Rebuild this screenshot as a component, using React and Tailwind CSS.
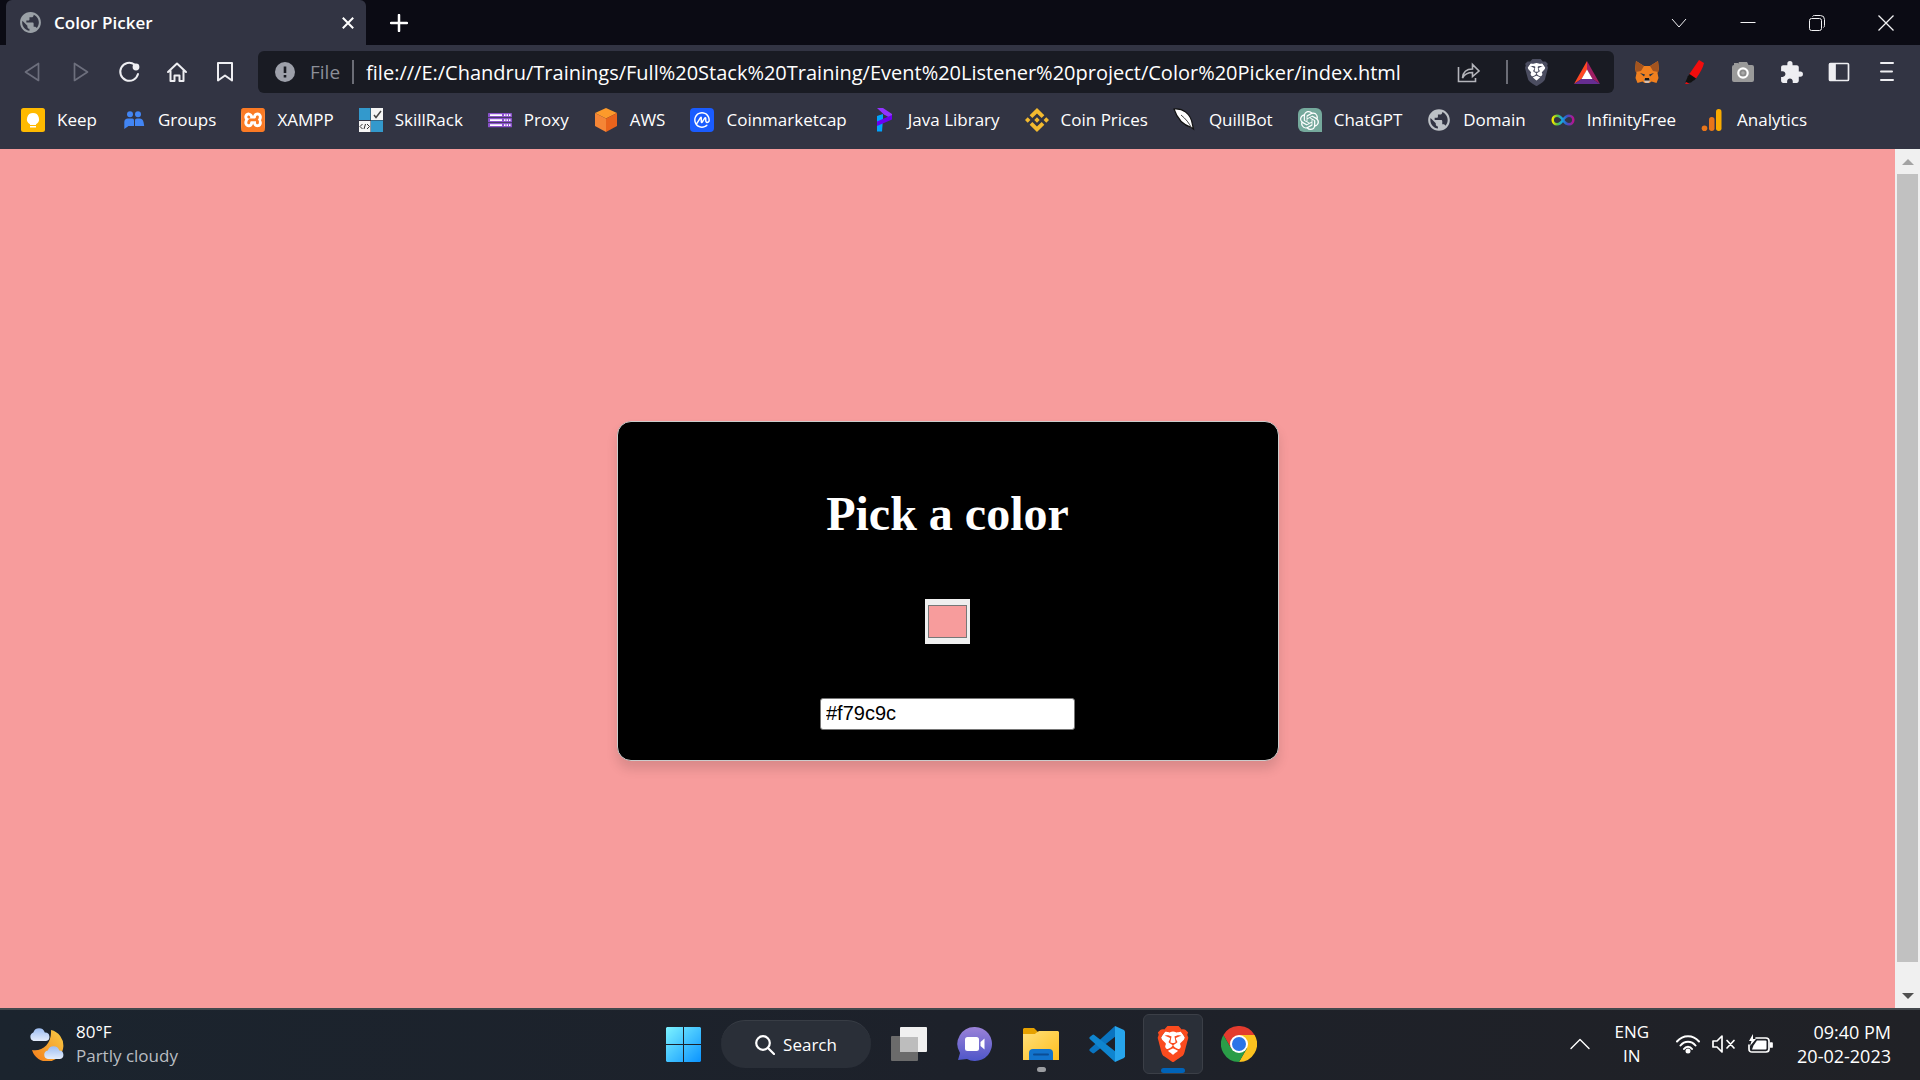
import React, { useState } from "react";
import { MdPublic, MdExtension } from "react-icons/md";
import { SiBrave, SiBinance, SiXampp, SiCoinmarketcap, SiOpenai } from "react-icons/si";

const Keep = () => (
  <svg viewBox="0 0 24 24" className="size-6">
    <rect width="24" height="24" rx="2.500" fill="#ffba00" />
    <path d="M12 5a6 6 0 0 0-3 11.200V17h6v-.8A6 6 0 0 0 12 5zM9 18h6v1.500H9z" fill="#fff" />
  </svg>
);

const Groups = () => (
  <svg viewBox="0 0 24 24" className="size-6" fill="#4285f4">
    <circle cx="8" cy="6.300" r="3" />
    <circle cx="16" cy="6.300" r="3" />
    <path d="M2.300 21v-7c0-2 1.500-3.400 3.500-3.400h4.400c1.500 0 1.800 1 1.800 2.400V18H6.500z" />
    <path d="M13 18v-5c0-1.600.6-2.400 2-2.400h2.700c2 0 3.300 1.500 3.800 3.400l.7 4z" />
  </svg>
);

const Xampp = () => (
  <span className="flex size-6 items-center justify-center rounded-md bg-white">
    <SiXampp size={24} color="#fb7a24" />
  </span>
);

const SkillRack = () => (
  <svg viewBox="0 0 24 24" className="size-6">
    <path d="M0 0h11.500v12H0zM12 12.500h12V24H12z" fill="#3399cc" />
    <path d="M12 0h12v12H12zM0 13h11.500v11H0z" fill="#f5f5f5" />
    <path d="m15 7 2 2.500L22 3" stroke="#444" strokeWidth="1.500" fill="none" />
    <path d="m3.500 16-2.500 2.500L3.500 21M8 16l2.500 2.500L8 21M6.500 16 5 21" stroke="#333" fill="none" />
  </svg>
);

const Proxy = () => (
  <svg viewBox="0 0 24 24" className="size-6">
    {[5, 10, 15].map((y) => (
      <g key={y}>
        <rect y={y} width="24" height="4.300" rx=".6" fill="#8b52cc" />
        <path d={`M2 ${y + 2.1}h12M16 ${y + 2.1}h1.500M18.500 ${y + 2.1}h1.500M21 ${y + 2.1}h1.500`} stroke="#fff" strokeWidth="1.600" />
      </g>
    ))}
  </svg>
);

const Aws = () => (
  <svg viewBox="0 0 24 24" className="size-6">
    <path d="M12 0 23 5 12 10.500 1 5z" fill="#fd9a2b" />
    <path d="M1 5l11 5.500V24L1 18z" fill="#f58536" />
    <path d="M23 5l-11 5.500V24l11-6z" fill="#e9631c" />
  </svg>
);

const Cmc = () => (
  <span className="flex size-6 items-center justify-center rounded-sm bg-[#1a5cff]">
    <SiCoinmarketcap size={16} color="#fff" />
  </span>
);

const Java = () => (
  <svg viewBox="0 0 24 24" className="size-6">
    <path d="M5 8l6-2v4.500l-1 13H5z" fill="#00a3ff" />
    <path d="M5 0h6l9 6v5L12 6.500z" fill="#9333ff" />
    <path d="M20 7v4.500L5 18v-4.500z" fill="#6b00f0" />
  </svg>
);

const Quill = () => (
  <svg viewBox="0 0 24 24" className="size-6">
    <path d="M1 1c8-1 17 4 18.500 16l1 4-2-1.500C10 17 4 10 1 1z" fill="#fff" stroke="#111" strokeWidth="1.200" />
    <path d="M8 7c5 4 8 8 10.500 13" stroke="#444" fill="none" />
  </svg>
);

const Gpt = () => (
  <span className="flex size-6 items-center justify-center rounded-l-md rounded-tr-md bg-[#75a99c]">
    <SiOpenai size={19} color="#fff" />
  </span>
);

const Infinity = () => (
  <svg viewBox="0 0 24 24" className="size-6">
    <defs>
      <linearGradient id="inf">
        <stop offset="0" stopColor="#f5e600" />
        <stop offset=".22" stopColor="#5fc43a" />
        <stop offset=".45" stopColor="#16a6e8" />
        <stop offset=".68" stopColor="#3558c8" />
        <stop offset="1" stopColor="#b8128f" />
      </linearGradient>
    </defs>
    <path d="M12 12c-2-3-3.500-4.300-6-4.300a4.300 4.300 0 0 0 0 8.600c2.500 0 4-1.300 6-4.300s3.500-4.300 6-4.300a4.300 4.300 0 0 1 0 8.600c-2.500 0-4-1.300-6-4.300z" fill="none" stroke="url(#inf)" strokeWidth="2.500" />
  </svg>
);

const Analytics = () => (
  <svg viewBox="0 0 24 24" className="size-6">
    <rect x="15" y="1" width="5.500" height="22" rx="2.700" fill="#f9ab00" />
    <rect x="8" y="9" width="5.500" height="14" rx="2.700" fill="#e8751a" />
    <circle cx="3.500" cy="20.200" r="2.800" fill="#e8751a" />
  </svg>
);

const bookmarks = [
  ["Keep", <Keep />],
  ["Groups", <Groups />],
  ["XAMPP", <Xampp />],
  ["SkillRack", <SkillRack />],
  ["Proxy", <Proxy />],
  ["AWS", <Aws />],
  ["Coinmarketcap", <Cmc />],
  ["Java Library", <Java />],
  ["Coin Prices", <SiBinance size={24} color="#f3ba2f" />],
  ["QuillBot", <Quill />],
  ["ChatGPT", <Gpt />],
  ["Domain", <MdPublic size={26} color="#bdc1c6" className="-mx-px" />],
  ["InfinityFree", <Infinity />],
  ["Analytics", <Analytics />],
];

function Lion({ className, shield }) {
  return (
    <svg viewBox="0 0 24 24" className={className}>
      <path d="M7 3h10l3 4.500-1.800 8.500L12 21l-6.200-5L4 7.500z" fill="#fff" />
      <SiBrave size={24} color={shield} />
    </svg>
  );
}

const Fox = () => (
  <svg viewBox="0 0 24 24" className="size-6">
    <path d="M1 1l8 5h6l8-5 .8 8-1.300 4 1 5-2 5-5-1.500-2 1.500h-5l-2-1.500-5 1.500-2-5 1-5L.2 9z" fill="#f0801f" />
    <path d="M1 1l8 5-3 5-5.500 1L.2 8zM23 1l-8 5 3 5 5.500 1 .3-4z" fill="#a3541f" />
    <path d="M5 13l5 1.500-1 2zM19 13l-5 1.500 1 2z" fill="#233447" />
    <path d="M9 19l1.500-1h3l1.500 1v2l-1.500 2h-3L9 21z" fill="#d5bfb2" />
    <path d="M10 18h4l.8 2.500H9.200z" fill="#161616" />
  </svg>
);

const Marker = () => (
  <svg viewBox="0 0 24 24" className="size-6">
    <path d="M16 0l5 3c-1 5-4 10-8 15.500L6 14.500z" fill="#f20d0d" />
    <path d="M5 16l6 4-3 2.500-4 .5-1.500-1z" fill="#111" />
    <path d="M6.500 14l6.500 4.500-2 2L4.500 17z" fill="#111" />
    <path d="M2 24l1.500-2 3 2z" fill="#f20d0d" />
  </svg>
);

const Camera = () => (
  <svg viewBox="0 0 24 24" className="size-6">
    <path d="M8 2h8l1.500 3H21a2 2 0 0 1 2 2v13a2 2 0 0 1-2 2H3a2 2 0 0 1-2-2V7a2 2 0 0 1 2-2h3.500z" fill="#9a9a9a" />
    <rect x="3" y="3" width="4" height="2" fill="#9a9a9a" />
    <circle cx="12" cy="13" r="4.700" fill="#8a8a8a" stroke="#fff" strokeWidth="2.200" />
    <circle cx="12" cy="13" r="1.800" fill="#aaa" />
  </svg>
);

const line = { fill: "none", stroke: "#eeeef2", strokeWidth: 1.7, strokeLinejoin: "round", strokeLinecap: "round" };

const Sidebar = () => (
  <svg viewBox="0 0 24 24" className="size-6" {...line}>
    <rect x="2.500" y="3.500" width="19" height="17" rx="1" />
    <path d="M3 4h5v16H3z" fill="#eeeef2" />
  </svg>
);

const Menu = () => (
  <svg viewBox="0 0 24 24" className="size-6" {...line} strokeWidth="2">
    <path d="M6 3h12M6 11.500h11M6 20h12" />
  </svg>
);

const navButtons = [
  ["Back", <svg viewBox="0 0 24 24" className="size-6" {...line} stroke="#6d6f7d"><path d="M17.500 3.500v17L4.500 12z" /></svg>],
  ["Forward", <svg viewBox="0 0 24 24" className="size-6" {...line} stroke="#6d6f7d"><path d="M5.500 3.500v17l13-8.500z" /></svg>],
  ["Reload", <svg viewBox="0 0 24 24" className="size-6" {...line} strokeWidth="2"><path d="M17.500 4.500A9 9 0 1 0 21 14" /><circle cx="19" cy="7" r="2.400" fill="#eeeef2" /></svg>],
  ["Home", <svg viewBox="0 0 24 24" className="size-6" {...line} strokeWidth="2"><path d="M3 12l9-8.500 9 8.500M5.500 10.500V21h4v-5.500h5V21h4V10.500" /></svg>],
  ["Bookmark", <svg viewBox="0 0 24 24" className="size-6" {...line} strokeWidth="2"><path d="M5 3h14v17.500l-7-5-7 5z" /></svg>],
];

const extensions = [
  ["MetaMask", <Fox />],
  ["Marker", <Marker />],
  ["Screenshot", <Camera />],
  ["Extensions", <MdExtension size={25} color="#eeeef2" />],
  ["Sidebar", <Sidebar />],
  ["Menu", <Menu />],
];

const thin = { fill: "none", stroke: "#f2f2f4", strokeWidth: 1 };
const windowButtons = [
  ["Search tabs", <svg viewBox="0 0 16 16" className="size-4" {...thin}><path d="M1 4l7 8 7-8" /></svg>],
  ["Minimize", <svg viewBox="0 0 16 16" className="size-4" {...thin}><path d="M.5 7.500h15" /></svg>],
  ["Restore", <svg viewBox="0 0 16 16" className="size-4" {...thin}><rect x=".5" y="3.500" width="12" height="12" rx="2" /><path d="M3.500 1.500q.5-1 2-1h6q4 0 4 4v6q0 1.500-1 2" /></svg>],
  ["Close", <svg viewBox="0 0 16 16" className="size-4" {...thin} strokeWidth="1.300"><path d="M.5.5l15 15M15.500.5l-15 15" /></svg>],
];

function TabStrip() {
  return (
    <div className="flex h-[45px] bg-[#0b0b14] pl-1.5">
      <div className="flex w-[360px] items-center rounded-t-md bg-[#323443] pr-2.5 pl-3">
        <MdPublic size={25} color="#9aa0a6" />
        <span className="ml-[11px] flex-1 text-[17px] font-semibold">Color Picker</span>
        <button aria-label="Close tab" className="flex size-4 items-center justify-center">
          <svg viewBox="0 0 12 12" className="size-3" stroke="#fff" strokeWidth="2"><path d="M.8.8l10.400 10.400M11.200.8.8 11.200" /></svg>
        </button>
      </div>
      <button aria-label="New tab" className="ml-6 self-center">
        <svg viewBox="0 0 18 18" className="size-[18px]" stroke="#fff" strokeWidth="2.500" strokeLinecap="round"><path d="M9 1v16M1 9h16" /></svg>
      </button>
      <div className="ml-auto flex">
        {windowButtons.map(([name, icon]) => (
          <button key={name} aria-label={name} className="flex w-[69px] items-center justify-center">{icon}</button>
        ))}
      </div>
    </div>
  );
}

function Toolbar() {
  return (
    <div className="flex items-center px-[9px] pt-1.5">
      {navButtons.map(([name, icon]) => (
        <button key={name} aria-label={name} className="flex h-[42px] w-12 items-center justify-center">{icon}</button>
      ))}
      <div className="ml-[9px] flex h-[42px] min-w-0 flex-1 items-center rounded-md bg-[#191b23] pr-3.5 pl-[17px]">
        <svg viewBox="0 0 20 20" className="size-5"><circle cx="10" cy="10" r="10" fill="#9da0aa" /><path d="M10 4.500v6.500M10 13v2.500" stroke="#191b23" strokeWidth="2.600" /></svg>
        <span className="ml-[15px] text-[19px] text-[#8b8e98]">File</span>
        <span className="mx-3 h-6 w-0.5 bg-[#6b6d76]" />
        <input aria-label="Address" defaultValue="file:///E:/Chandru/Trainings/Full%20Stack%20Training/Event%20Listener%20project/Color%20Picker/index.html" className="h-full min-w-0 flex-1 bg-transparent text-[20px] text-white outline-none" />
        <button aria-label="Share">
          <svg viewBox="0 0 24 24" className="size-6" fill="none" stroke="#b4b5bb" strokeWidth="1.600">
            <path d="M1.500 7v14.500h17V18M5.500 18c.5-6.500 4-9 10-9V4.500L22 11l-6.500 5.500v-4c-4.500 0-7.500 1-10 5.500z" />
          </svg>
        </button>
        <span className="mr-[15px] ml-[25px] h-6 w-0.5 bg-[#6b6d76]" />
        <button aria-label="Shields"><Lion className="size-[27px]" shield="#4b4d60" /></button>
        <button aria-label="Rewards" className="ml-6">
          <svg viewBox="0 0 26 23" className="h-[23px] w-[26px]">
            <path d="M13 0v9L7.500 18 0 23z" fill="#ff4724" />
            <path d="M13 0v9l5.500 9L26 23z" fill="#9e1f63" />
            <path d="M0 23l7.500-5h11l7.500 5z" fill="#662d91" />
            <path d="M13 8.500l5.500 9.500h-11z" fill="#fff" />
          </svg>
        </button>
      </div>
      <div className="ml-[9px] flex">
        {extensions.map(([name, icon]) => (
          <button key={name} aria-label={name} className="flex w-12 items-center justify-center">{icon}</button>
        ))}
      </div>
    </div>
  );
}

function Bookmarks() {
  return (
    <nav className="flex h-14 items-center gap-[25px] px-[21px] pb-0.5">
      {bookmarks.map(([name, icon]) => (
        <a key={name} href="#" className="flex shrink-0 items-center gap-3 text-[17px] whitespace-nowrap">
          {icon}
          {name}
        </a>
      ))}
    </nav>
  );
}

function Picker({ color, setColor }) {
  return (
    <form className="flex w-full max-w-[662px] flex-col items-center rounded-[14px] border border-[#ccc] bg-black px-8 pt-16 pb-[30px] shadow-[0_8px_12px_rgba(0,0,0,0.12)]">
      <h1 className="font-['Liberation_Serif',serif] text-[48px] leading-[56px] font-bold text-white">Pick a color</h1>
      <input
        type="color"
        aria-label="Color"
        value={color}
        onChange={(e) => setColor(e.target.value)}
        className="mt-[57px] h-[45px] w-[45px] appearance-none bg-[#efefef] px-[3px] py-1.5 [&::-webkit-color-swatch]:rounded-none [&::-webkit-color-swatch]:border [&::-webkit-color-swatch]:border-[#777] [&::-webkit-color-swatch-wrapper]:p-0"
      />
      <input
        type="text"
        aria-label="Color value"
        value={color}
        onChange={(e) => setColor(e.target.value)}
        className="mt-[54px] h-8 w-[255px] rounded-[3px] border border-[#767676] bg-white px-[5px] font-['Liberation_Sans',sans-serif] text-[20px] text-black"
      />
    </form>
  );
}

function Scrollbar() {
  return (
    <div className="flex w-[25px] flex-col bg-[#f0f0f0]">
      <button aria-label="Scroll up" className="flex h-[25px] items-center justify-center">
        <svg viewBox="0 0 12 6" className="h-1.5 w-3"><path d="M6 0l6 6H0z" fill="#a3a3a3" /></svg>
      </button>
      <div className="mx-0.5 mb-[21px] flex-1 bg-[#c1c1c1]" />
      <button aria-label="Scroll down" className="flex h-[25px] items-center justify-center">
        <svg viewBox="0 0 12 6" className="h-1.5 w-3"><path d="M0 0h12L6 6z" fill="#505050" /></svg>
      </button>
    </div>
  );
}

const WindowsLogo = () => (
  <svg viewBox="0 0 35 35" className="size-[35px]">
    <defs>
      <linearGradient id="win" x1="0" y1="0" x2="35" y2="35" gradientUnits="userSpaceOnUse">
        <stop stopColor="#7df3ff" /><stop offset="1" stopColor="#0a93ff" />
      </linearGradient>
    </defs>
    <path d="M1 0h16v17H0V1zM18 0h16l1 1v16H18zM0 18h17v17H1l-1-1zM18 18h17v16l-1 1H18z" fill="url(#win)" />
  </svg>
);

const TaskView = () => (
  <svg viewBox="0 0 36 34" className="h-[34px] w-9">
    <rect y="9" width="27" height="25" rx="1" fill="#6b6b6b" />
    <rect x="9" width="27" height="25" rx="1" fill="#f0f0f0" />
    <path d="M9 10h18v15H9z" fill="#bdbdbd" />
  </svg>
);

const Chat = () => (
  <svg viewBox="0 0 36 36" className="size-9">
    <defs>
      <linearGradient id="chat" x1="0" y1="0" x2="0" y2="1">
        <stop stopColor="#9b82d8" /><stop offset="1" stopColor="#4e56c9" />
      </linearGradient>
    </defs>
    <path d="M18 1a17 17 0 1 1-8 32l-9 1 2-7A17 17 0 0 1 18 1z" fill="url(#chat)" />
    <rect x="8" y="11" width="14" height="14" rx="2.500" fill="#fff" />
    <path d="M23.500 16l4-3.500v11l-4-3.500z" fill="#fff" />
  </svg>
);

const Folder = () => (
  <svg viewBox="0 0 36 36" className="size-9">
    <defs>
      <linearGradient id="fold" x1="0" y1="0" x2="1" y2="1">
        <stop stopColor="#ffe07a" /><stop offset="1" stopColor="#ffbe1e" />
      </linearGradient>
    </defs>
    <path d="M1 2h10l4 4v6H0V3z" fill="#e6a100" />
    <path d="M13 7l3-2h19l1 1v28H0V8h12z" fill="url(#fold)" />
    <path d="M6 34v-7q0-4 4-4h16q4 0 4 4v7z" fill="#1273cc" />
    <path d="M11 28.500h14" stroke="#0b4d94" strokeWidth="2" strokeLinecap="round" />
  </svg>
);

const VsCode = () => (
  <svg viewBox="0 0 36 36" className="size-9">
    <path d="M26 0L.8 23a1.500 1.500 0 0 0 0 2l2.500 2a1.500 1.500 0 0 0 2 0L27 10z" fill="#0a74c0" />
    <path d="M26 36L.8 13a1.500 1.500 0 0 1 0-2l2.500-2a1.500 1.500 0 0 1 2 0L27 26z" fill="#0f85cf" />
    <path d="M26 0l9 4 1 1.500v25L35 32l-9 4z" fill="#27a5ec" />
  </svg>
);

const Chrome = () => (
  <svg viewBox="0 0 36 36" className="size-9">
    <path d="M2.400 9A18 18 0 0 1 33.600 9H18L10.200 22.500z" fill="#e33b2e" />
    <path d="M33.600 9A18 18 0 0 1 18 36l7.800-13.500L18 9z" fill="#fcc21f" />
    <path d="M2.400 9A18 18 0 0 0 18 36l7.800-13.500H10.200z" fill="#2a9d48" />
    <circle cx="18" cy="18" r="9" fill="#fff" />
    <circle cx="18" cy="18" r="7" fill="#2b74e8" />
  </svg>
);

const Weather = () => (
  <svg viewBox="0 0 36 34" className="h-[34px] w-9">
    <defs>
      <linearGradient id="moon" x1="0" y1="1" x2="1" y2="0">
        <stop stopColor="#f57c1a" /><stop offset="1" stopColor="#f8cc45" />
      </linearGradient>
      <linearGradient id="cloud" x1="0" y1="0" x2="0" y2="1">
        <stop stopColor="#9dbdf2" /><stop offset="1" stopColor="#e4edfc" />
      </linearGradient>
    </defs>
    <path d="M23 3a16 16 0 1 1-19 20c10 2 20-6 19-20z" fill="url(#moon)" />
    <path d="M5.500 14a4.500 4.500 0 0 1-.2-8.500 6 6 0 0 1 11.500 0A4.300 4.300 0 0 1 18 14z" fill="url(#cloud)" />
    <path d="M20 32a4.300 4.300 0 0 1-.2-8.500 6 6 0 0 1 11.500 0A4.300 4.300 0 0 1 32 32z" fill="url(#cloud)" />
  </svg>
);

function TaskButton({ name, children, active, indicator }) {
  return (
    <button
      aria-label={name}
      className={
        active
          ? "relative flex size-[60px] items-center justify-center rounded-md border border-[#3b3f47] bg-[#2a2f38]"
          : "relative flex size-[60px] items-center justify-center"
      }
    >
      {children}
      {indicator && <span className={active ? "absolute bottom-0 h-[5px] w-6 rounded-full bg-[#0063b8]" : "absolute bottom-0.5 h-[5px] w-[9px] rounded-full bg-[#9b9da1]"} />}
    </button>
  );
}

function Taskbar() {
  const w = { fill: "none", stroke: "#fff", strokeWidth: 1.7, strokeLinecap: "round", strokeLinejoin: "round" };
  return (
    <footer className="grid h-[72px] grid-cols-[1fr_auto_1fr] items-center border-t-2 border-[#43484d] bg-linear-to-r from-[#1b242e] via-[#1d212a] to-[#202126] pb-0.5 text-[17px] leading-6">
      <div className="flex items-center gap-3 pl-7">
        <Weather />
        <div>
          <div>80°F</div>
          <div className="text-[#b9bdc2]">Partly cloudy</div>
        </div>
      </div>
      <div className="flex items-center gap-1.5 pl-0.5">
        <TaskButton name="Start"><WindowsLogo /></TaskButton>
        <button className="mx-0.5 flex h-12 w-[150px] items-center justify-center gap-2 rounded-full border-t border-[#383d45] bg-[#2a2f38]">
          <svg viewBox="0 0 20 20" className="size-5" {...w} strokeWidth="2.200"><circle cx="8" cy="8" r="6.800" /><path d="M13 13l6 6" /></svg>
          Search
        </button>
        <TaskButton name="Task view"><TaskView /></TaskButton>
        <TaskButton name="Chat"><Chat /></TaskButton>
        <TaskButton name="File Explorer" indicator><Folder /></TaskButton>
        <TaskButton name="Visual Studio Code"><VsCode /></TaskButton>
        <TaskButton name="Brave" active indicator><Lion className="size-9" shield="#fb4b1e" /></TaskButton>
        <TaskButton name="Chrome"><Chrome /></TaskButton>
      </div>
      <div className="flex items-center justify-end pr-[29px]">
        <button aria-label="Show hidden icons">
          <svg viewBox="0 0 20 12" className="h-3 w-5" {...w} strokeWidth="1.400"><path d="M1 10.500l9-9 9 9" /></svg>
        </button>
        <div className="ml-6 text-center">ENG<br />IN</div>
        <div className="ml-[27px] flex items-center gap-3">
          <svg viewBox="0 0 24 20" className="h-5 w-6" {...w} strokeWidth="2"><path d="M1 7.500c6-7 16-7 22 0M4.500 11.500c4-5 11-5 15 0M8 15c2-3 6-3 8 0" /><circle cx="12" cy="17" r="1.500" fill="#fff" /></svg>
          <svg viewBox="0 0 24 20" className="h-5 w-6" {...w}><path d="M1 7v6h4l5 5V2L5 7zM15 6.500l7 7.500M22 6.500L15 14" /></svg>
          <svg viewBox="0 0 25 20" className="h-5 w-[25px]" {...w}>
            <path d="M8 4h10q3 0 3 3v8q0 3-3 3H4q-3 0-3-3v-4" />
            <path d="M9 6.500h8.500q1 0 1 1v7q0 1-1 1H4l1.500-4z" fill="#fff" stroke="none" />
            <path d="M22.500 9v4h1.500V9z" fill="#fff" />
            <path d="M5 0L1 7h2.500L2 12l6-7H5z" fill="#fff" stroke="none" />
          </svg>
        </div>
        <div className="ml-6 text-right text-[18px]">09:40 PM<br />20-02-2023</div>
      </div>
    </footer>
  );
}

export default function App() {
  const [color, setColor] = useState("#f79c9c");
  return (
    <div className="flex h-screen flex-col overflow-hidden font-['Open_Sans','Noto_Sans',sans-serif] text-white">
      <header className="bg-[#323443]">
        <TabStrip />
        <Toolbar />
        <Bookmarks />
      </header>
      <div className="flex min-h-0 flex-1">
        <main className="flex flex-1 items-center justify-center pt-6" style={{ backgroundColor: color }}>
          <Picker color={color} setColor={setColor} />
        </main>
        <Scrollbar />
      </div>
      <Taskbar />
    </div>
  );
}
